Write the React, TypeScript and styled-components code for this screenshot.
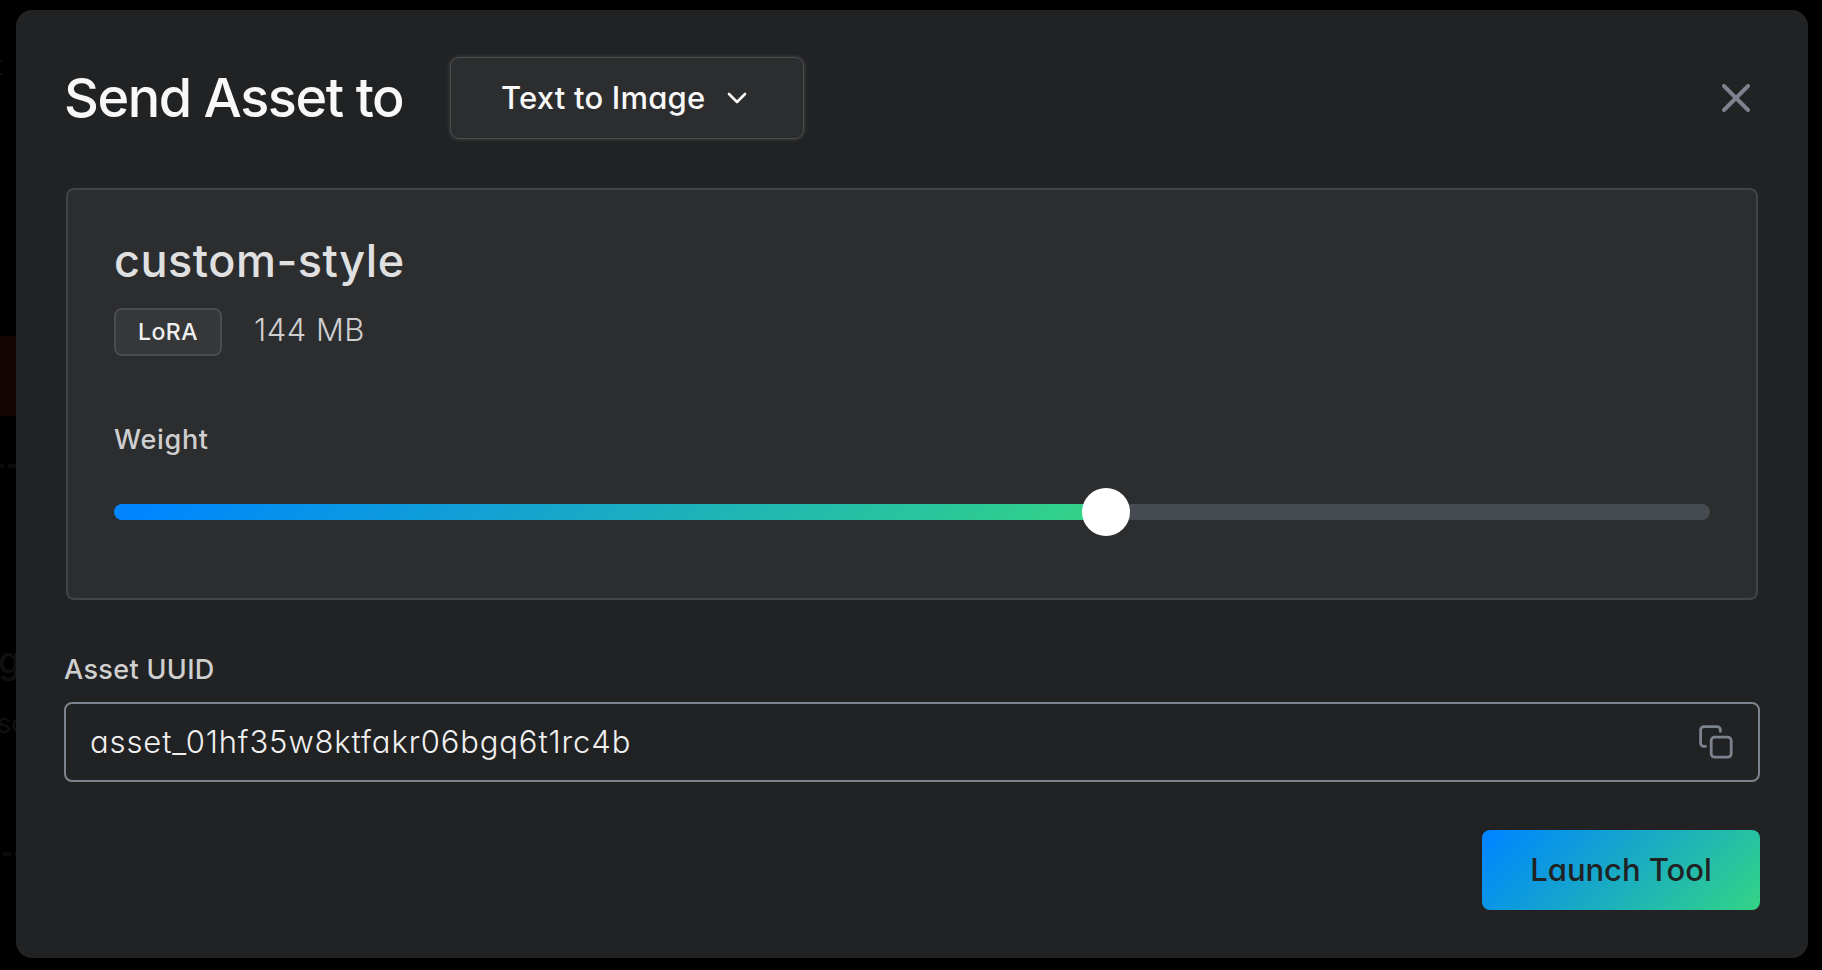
import React, { useState } from "react";
import styled, { createGlobalStyle } from "styled-components";

const GlobalStyle = createGlobalStyle`
  * { box-sizing: border-box; }
  body {
    margin: 0;
    background: #000;
    font-family: Inter, "Liberation Sans", sans-serif;
    font-feature-settings: "cv11" 1;
  }
`;

const gradient = "linear-gradient(135deg, #0085ff 3%, #33d485 100%)";

const Page = styled.div`
  position: relative;
  display: flex;
  width: 1822px;
  height: 970px;
  padding: 10px 14px 12px 16px;
  overflow: hidden;
  background: #000;
`;

/* Page content that peeks out from under the dark overlay */
const Behind = styled.div`
  position: absolute;
  inset: 0 auto 0 0;
  width: 40px;
  overflow: hidden;
`;

const Remnant = styled.span<{ $top: number; $left: number; $size: number; $weight?: number }>`
  position: absolute;
  top: ${(p) => p.$top}px;
  left: ${(p) => p.$left}px;
  font-size: ${(p) => p.$size}px;
  font-weight: ${(p) => p.$weight ?? 400};
  line-height: 40px;
  white-space: nowrap;
  color: #101011;
`;

const Dashes = styled.div<{ $top: number; $left: number }>`
  position: absolute;
  top: ${(p) => p.$top}px;
  left: ${(p) => p.$left}px;
  width: 36px;
  height: 4px;
  background: repeating-linear-gradient(90deg, #0b0b0c 0 8px, transparent 8px 12px);
`;

const Alert = styled.div`
  position: absolute;
  top: 336px;
  left: 0;
  width: 16px;
  height: 80px;
  background: #120504;
`;

const Modal = styled.main`
  position: relative;
  display: flex;
  flex: 1;
  flex-direction: column;
  padding: 46px 48px 48px;
  border-radius: 16px;
  background: #212223;
`;

const Header = styled.header`
  display: flex;
  align-items: center;
  height: 84px;
`;

const Title = styled.h1`
  margin: 0;
  width: 386px;
  font-size: 54px;
  font-weight: 500;
  line-height: 64px;
  letter-spacing: -1.45px;
  white-space: nowrap;
  color: #f8f8f8;
`;

const Select = styled.button`
  display: flex;
  align-items: center;
  justify-content: space-between;
  width: 354px;
  height: 82px;
  padding: 0 56px 1px 50px;
  border: 1px solid #4a4b4d;
  border-radius: 9px;
  background: #2c2d2f;
  box-shadow: 0 0 4px #4a4b4d;
  font: inherit;
  font-size: 31px;
  font-weight: 460;
  letter-spacing: 0.2px;
  white-space: nowrap;
  color: #f8f8f8;
`;

const IconButton = styled.button`
  display: flex;
  padding: 0;
  border: 0;
  background: none;
  color: #7d838e;
`;

const CloseButton = styled(IconButton)`
  margin: 0 10px 0 auto;
`;

const Card = styled.section`
  height: 412px;
  margin: 48px 2px 0;
  padding: 42px 46px 0;
  border: 2px solid #434446;
  border-radius: 8px;
  background: #2c2d2f;
`;

const AssetName = styled.h2`
  margin: 0 0 19px;
  font-size: 45px;
  font-weight: 480;
  line-height: 57px;
  letter-spacing: 0.52px;
  color: #e0e0e1;
`;

const Meta = styled.div`
  display: flex;
  align-items: center;
  gap: 32px;
`;

const Badge = styled.span`
  display: flex;
  align-items: center;
  justify-content: center;
  width: 108px;
  height: 48px;
  border: 2px solid #4a4b4d;
  border-radius: 8px;
  background: #363739;
  font-size: 23px;
  font-weight: 480;
  letter-spacing: 0.5px;
  color: #efefef;
`;

const Size = styled.span`
  padding-bottom: 5px;
  font-size: 31px;
  font-weight: 300;
  letter-spacing: 0.5px;
  color: #cfcfd0;
`;

const Label = styled.label`
  display: block;
  font-size: 27px;
  font-weight: 460;
  line-height: 36px;
  color: #cfcfd0;
`;

const WeightLabel = styled(Label)`
  margin: 66px 0 30px;
  letter-spacing: 0.7px;
`;

const UuidLabel = styled(Label)`
  margin: 52px 0 14px;
  letter-spacing: 0.35px;
`;

const Slider = styled.div`
  display: flex;
  align-items: center;
  height: 48px;
`;

const Filled = styled.div`
  height: 16px;
  margin-right: -24px;
  border-radius: 8px 0 0 8px;
  background: ${gradient};
`;

const Thumb = styled.div`
  z-index: 1;
  flex: none;
  width: 48px;
  height: 48px;
  border-radius: 50%;
  background: #fff;
`;

const Remaining = styled.div`
  flex: 1;
  height: 16px;
  margin-left: -24px;
  border-radius: 0 8px 8px 0;
  background: #464a51;
`;

const Field = styled.div`
  display: flex;
  align-items: center;
  justify-content: space-between;
  height: 80px;
  padding: 0 25px 0 24px;
  border: 2px solid #7d838e;
  border-radius: 8px;
`;

const Uuid = styled.span`
  padding-bottom: 1px;
  font-size: 31px;
  font-weight: 300;
  letter-spacing: 0.88px;
  color: #f0f0f0;
`;

const Actions = styled.footer`
  display: flex;
  justify-content: flex-end;
  margin-top: 48px;
`;

const LaunchButton = styled.button`
  width: 278px;
  height: 80px;
  padding: 0 0 1px;
  border: 0;
  border-radius: 8px;
  background: ${gradient};
  font: inherit;
  font-size: 31px;
  font-weight: 460;
  letter-spacing: -0.05px;
  color: #212223;
`;

export default function App() {
  const [weight] = useState(62.16);

  return (
    <Page>
      <GlobalStyle />
      <Behind aria-hidden>
        <Alert />
        <Remnant $top={46} $left={-6} $size={27}>t</Remnant>
        <Dashes $top={464} $left={-4} />
        <Remnant $top={640} $left={-2} $size={36} $weight={500}>g</Remnant>
        <Remnant $top={704} $left={-3} $size={27}>so</Remnant>
        <Dashes $top={852} $left={3} />
      </Behind>
      <Modal>
        <Header>
          <Title>Send Asset to</Title>
          <Select>
            Text to Image
            <svg width="20" height="12" viewBox="0 0 20 12" fill="none" stroke="currentColor" strokeWidth="2.6" strokeLinecap="round" strokeLinejoin="round">
              <path d="M2 2 10 10 18 2" />
            </svg>
          </Select>
          <CloseButton aria-label="Close">
            <svg width="28" height="28" viewBox="0 0 28 28" fill="none" stroke="currentColor" strokeWidth="4" strokeLinecap="round">
              <path d="M2 2 26 26M26 2 2 26" />
            </svg>
          </CloseButton>
        </Header>
        <Card>
          <AssetName>custom-style</AssetName>
          <Meta>
            <Badge>LoRA</Badge>
            <Size>144 MB</Size>
          </Meta>
          <WeightLabel>Weight</WeightLabel>
          <Slider>
            <Filled style={{ width: `${weight}%` }} />
            <Thumb />
            <Remaining />
          </Slider>
        </Card>
        <UuidLabel>Asset UUID</UuidLabel>
        <Field>
          <Uuid>asset_01hf35w8ktfakr06bgq6t1rc4b</Uuid>
          <IconButton aria-label="Copy">
            <svg width="34" height="34" viewBox="0 0 34 34" fill="none" stroke="currentColor" strokeWidth="2.8" strokeLinecap="round" strokeLinejoin="round">
              <rect x="12.2" y="12.2" width="20" height="20" rx="3.4" />
              <path d="M6.4 21.4H5A3.4 3.4 0 0 1 1.6 18V5A3.4 3.4 0 0 1 5 1.6h13A3.4 3.4 0 0 1 21.4 5v1.4" />
            </svg>
          </IconButton>
        </Field>
        <Actions>
          <LaunchButton>Launch Tool</LaunchButton>
        </Actions>
      </Modal>
    </Page>
  );
}
